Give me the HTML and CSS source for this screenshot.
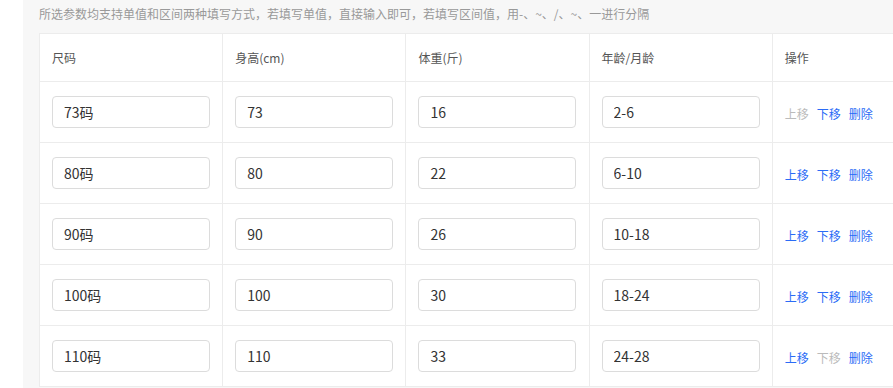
FILE: index.html
```html
<!DOCTYPE html>
<html lang="zh">
<head>
<meta charset="utf-8">
<link rel="stylesheet" href="styles.css">
</head>
<body>
<div class="page">
  <div class="panel">
    <p class="tip">所选参数均支持单值和区间两种填写方式，若填写单值，直接输入即可，若填写区间值，用-、~、/、~、一进行分隔</p>
    <table class="grid">
      <thead>
        <tr><th>尺码</th><th>身高(cm)</th><th>体重(斤)</th><th>年龄/月龄</th><th>操作</th></tr>
      </thead>
      <tbody>
        <tr>
          <td><input class="field" value="73码"></td>
          <td><input class="field" value="73"></td>
          <td><input class="field" value="16"></td>
          <td><input class="field" value="2-6"></td>
          <td><span class="act off">上移</span><span class="act">下移</span><span class="act">删除</span></td>
        </tr>
        <tr>
          <td><input class="field" value="80码"></td>
          <td><input class="field" value="80"></td>
          <td><input class="field" value="22"></td>
          <td><input class="field" value="6-10"></td>
          <td><span class="act">上移</span><span class="act">下移</span><span class="act">删除</span></td>
        </tr>
        <tr>
          <td><input class="field" value="90码"></td>
          <td><input class="field" value="90"></td>
          <td><input class="field" value="26"></td>
          <td><input class="field" value="10-18"></td>
          <td><span class="act">上移</span><span class="act">下移</span><span class="act">删除</span></td>
        </tr>
        <tr>
          <td><input class="field" value="100码"></td>
          <td><input class="field" value="100"></td>
          <td><input class="field" value="30"></td>
          <td><input class="field" value="18-24"></td>
          <td><span class="act">上移</span><span class="act">下移</span><span class="act">删除</span></td>
        </tr>
        <tr>
          <td><input class="field" value="110码"></td>
          <td><input class="field" value="110"></td>
          <td><input class="field" value="33"></td>
          <td><input class="field" value="24-28"></td>
          <td><span class="act">上移</span><span class="act off">下移</span><span class="act">删除</span></td>
        </tr>
      </tbody>
    </table>
  </div>
</div>
</body>
</html>
```

FILE: styles.css
```css
html, body {
  margin: 0;
  padding: 0;
  background: #ffffff;
  overflow: hidden;
  font-family: "Noto Sans CJK SC", "Noto Sans", sans-serif;
}
.page {
  padding-left: 23px;
  height: 388px;
}
.panel {
  background: #f7f7f7;
  height: 388px;
  padding-left: 16px;
  width: 1000px;
}
.tip {
  margin: 0;
  height: 33px;
  line-height: 28px;
  font-size: 12px;
  color: #999999;
}
.grid {
  border-collapse: collapse;
  background: #ffffff;
  table-layout: fixed;
  width: 917px;
}
.grid th, .grid td {
  border: 1px solid #ececec;
  width: 183px;
  padding: 0 0 0 12px;
  text-align: left;
  box-sizing: border-box;
}
.grid th {
  height: 48px;
  font-size: 12px;
  font-weight: normal;
  color: #555555;
}
.grid td {
  height: 61px;
}
.field {
  box-sizing: border-box;
  width: 158px;
  height: 32px;
  border: 1px solid #dcdcdc;
  border-radius: 4px;
  padding: 0 11px;
  font-family: "Noto Sans CJK SC", "Noto Sans", sans-serif;
  font-size: 14px;
  color: #333333;
  outline: none;
  display: block;
}
.act {
  font-size: 12px;
  color: #2b6cf6;
  margin-right: 8px;
}
.off {
  color: #bbbbbb;
}
```
